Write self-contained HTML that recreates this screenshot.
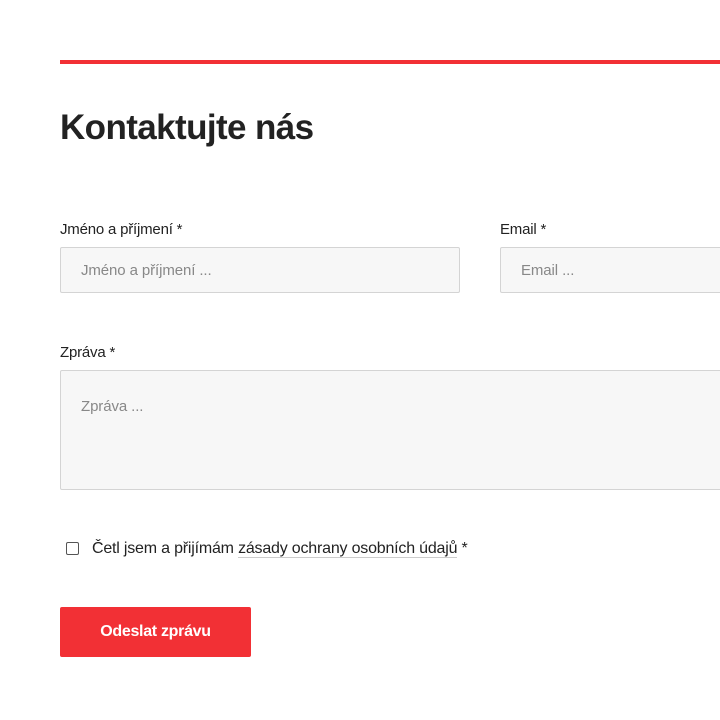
<!DOCTYPE html>
<html><head><meta charset="utf-8"><style>
html,body{margin:0;padding:0;background:#fff;width:720px;height:720px;overflow:hidden;font-family:"Liberation Sans",sans-serif;color:#222}
.abs{position:absolute}
.line{left:60px;top:60px;width:660px;height:4px;background:#f23035}
h1{position:absolute;left:60px;top:108px;margin:0;font-size:35px;font-weight:bold;letter-spacing:-0.6px;color:#222}
.lbl{font-size:15px;letter-spacing:-0.2px;color:#222}
.in{background:#f7f7f7;border:1px solid #d4d4d4;box-sizing:border-box;border-radius:2px;font-size:15px;color:#888;letter-spacing:-0.1px}
.btn{left:60px;top:607px;width:191px;height:50px;background:#f23035;border-radius:2px;color:#fff;font-size:16px;text-align:center;line-height:50px;font-weight:bold;letter-spacing:-0.3px}
</style></head><body>
<div class="abs line"></div>
<h1>Kontaktujte nás</h1>
<div class="abs lbl" style="left:60px;top:221px">Jméno a příjmení *</div>
<div class="abs in" style="left:60px;top:247px;width:400px;height:46px;padding:14px 20px">Jméno a příjmení ...</div>
<div class="abs lbl" style="left:500px;top:221px">Email *</div>
<div class="abs in" style="left:500px;top:247px;width:240px;height:46px;padding:14px 20px">Email ...</div>
<div class="abs lbl" style="left:60px;top:344px">Zpráva *</div>
<div class="abs in" style="left:60px;top:370px;width:680px;height:120px;padding:27px 20px">Zpráva ...</div>
<div class="abs" style="left:66px;top:542px;width:11px;height:11px;border:1px solid #555;border-radius:2px;background:#fff"></div>
<div class="abs lbl" style="left:92px;top:540px;font-size:16px">Četl jsem a přijímám <span style="border-bottom:1px solid #ccc">zásady ochrany osobních údajů</span> *</div>
<div class="abs btn">Odeslat zprávu</div>
</body></html>
